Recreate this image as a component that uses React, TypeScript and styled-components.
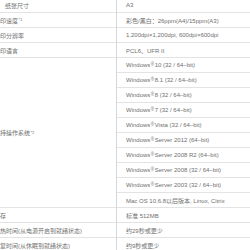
import React from 'react';
import styled, { createGlobalStyle } from 'styled-components';

const GlobalStyle = createGlobalStyle`
  html, body {
    margin: 0;
    padding: 0;
    background: #fff;
    overflow: hidden;
  }
  body {
    font-family: "Liberation Sans", "Noto Sans CJK SC", sans-serif;
  }
`;

type Row = { value: React.ReactNode };

const osList: string[] = [
  '10 (32 / 64–bit)',
  '8.1 (32 / 64–bit)',
  '8 (32 / 64–bit)',
  '7 (32 / 64–bit)',
  'Vista (32 / 64–bit)',
  'Server 2012 (64–bit)',
  'Server 2008 R2 (64–bit)',
  'Server 2008 (32 / 64–bit)',
  'Server 2003 (32 / 64–bit)',
];

const App = () => {
  const osRows: Row[] = [
    ...osList.map((s) => ({
      value: (
        <>
          Windows<Sup>®</Sup> {s}
        </>
      ),
    })),
    { value: 'Mac OS 10.6.8以后版本, Linux, Citrix' },
  ];

  return (
    <>
      <GlobalStyle />
      <SpecTable>
        <Label indent>纸张尺寸</Label>
        <Value>A3</Value>

        <Label>
          打印速度<Note>*1</Note>
        </Label>
        <Value>彩色/黑白：26ppm(A4)/15ppm(A3)</Value>

        <Label>打印分辨率</Label>
        <Value>1,200dpi×1,200dpi, 600dpi×600dpi</Value>

        <Label>打印语言</Label>
        <Value>PCL6、UFR II</Value>

        <Label span={osRows.length}>
          支持操作系统<Note>*2</Note>
        </Label>
        {osRows.map((r, i) => (
          <Value key={i}>{r.value}</Value>
        ))}

        <Label>内存</Label>
        <Value>标准 512MB</Value>

        <Label>预热时间(从电源开启到就绪状态)</Label>
        <Value>约29秒或更少</Value>

        <Label>恢复时间(从休眠到就绪状态)</Label>
        <Value>约9秒或更少</Value>
      </SpecTable>
    </>
  );
};

const SpecTable = styled.div`
  display: grid;
  grid-template-columns: 131px 1fr;
  grid-auto-rows: 15px;
  width: 300px;
  margin: -2px 0 0 -14px;
  font-size: 6px;
  color: #6f6f6f;
`;

const Label = styled.div<{ indent?: boolean; span?: number }>`
  display: flex;
  align-items: center;
  box-sizing: border-box;
  padding-left: ${(p) => (p.indent ? '19px' : '8px')};
  border-bottom: 1px solid #e3e3e3;
  border-right: 1px solid #d6d6d6;
  white-space: nowrap;
  grid-row: ${(p) => (p.span ? `span ${p.span}` : 'auto')};
`;

const Value = styled.div`
  display: flex;
  align-items: center;
  box-sizing: border-box;
  padding-left: 9px;
  border-bottom: 1px solid #e3e3e3;
  white-space: nowrap;
`;

const Sup = styled.sup`
  font-size: 4.5px;
  line-height: 0;
  position: relative;
  top: -0.5px;
  margin: 0 0.5px;
`;

const Note = styled.sup`
  font-size: 4px;
  line-height: 0;
  margin-left: 0.5px;
`;

export default App;
